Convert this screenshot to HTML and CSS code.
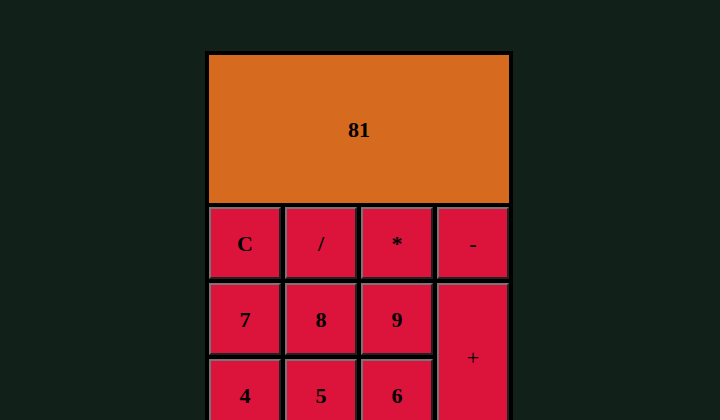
FILE: index.html
```html
<!DOCTYPE html>
<html>
<head>
<meta charset="utf-8">
<link rel="stylesheet" href="styles.css">
</head>
<body>
<div class="calc">
  <div class="display">81</div>
  <button class="key">C</button>
  <button class="key">/</button>
  <button class="key">*</button>
  <button class="key">-</button>
  <button class="key">7</button>
  <button class="key">8</button>
  <button class="key">9</button>
  <button class="key plus">+</button>
  <button class="key">4</button>
  <button class="key">5</button>
  <button class="key">6</button>
  <button class="key">1</button>
  <button class="key">2</button>
  <button class="key">3</button>
  <button class="key eq">=</button>
  <button class="key zero">0</button>
  <button class="key">.</button>
</div>
</body>
</html>
```

FILE: styles.css
```css
html, body {
  margin: 0;
  padding: 0;
}
body {
  background: #12201a;
  height: 420px;
  overflow: hidden;
  display: flex;
  justify-content: center;
  align-items: flex-start;
  padding-right: 2px;
  font-family: "Liberation Serif", "Times New Roman", serif;
}
.calc {
  margin-top: 51px;
  border: 4px solid #000;
  background: #000;
  display: grid;
  grid-template-columns: repeat(4, 72px);
  grid-template-rows: 148px repeat(5, 72px);
  gap: 4px;
}
.display {
  grid-column: 1 / 5;
  background: #d66a1f;
  display: flex;
  align-items: center;
  justify-content: center;
  padding-top: 2px;
  font-size: 22px;
  font-weight: bold;
  color: #000;
}
.key {
  background: #dc143c;
  border: 2px outset #767676;
  font-family: "Liberation Serif", "Times New Roman", serif;
  font-size: 22px;
  font-weight: bold;
  color: #000;
  padding: 2px 0 0;
  margin: 0;
}
.plus {
  grid-row: span 2;
  font-weight: normal;
}
.eq {
  grid-row: span 2;
}
.zero {
  grid-column: span 2;
}
```
